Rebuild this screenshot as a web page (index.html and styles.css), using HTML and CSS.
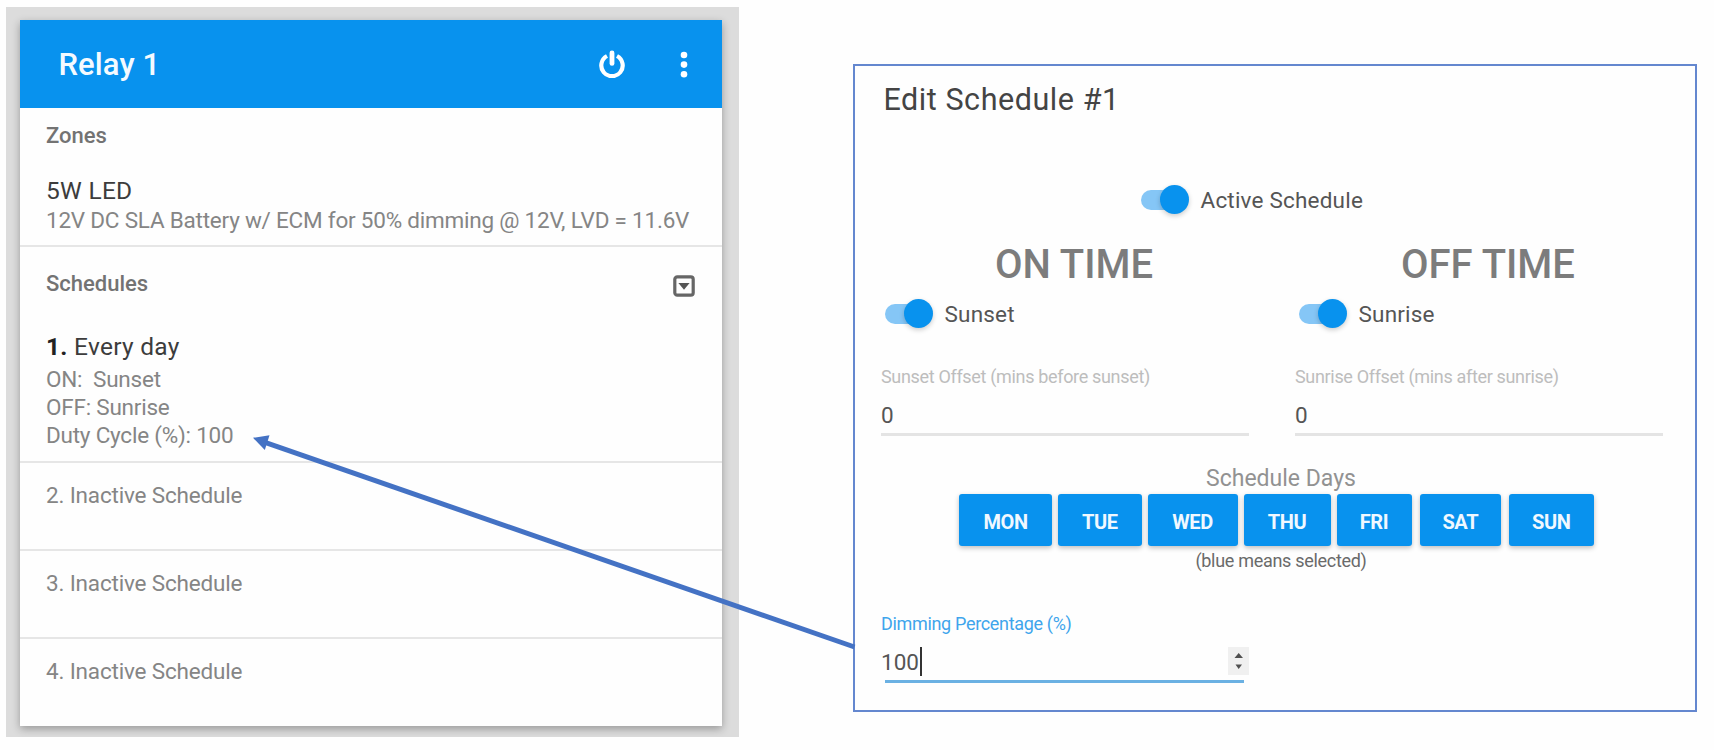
FILE: index.html
```html
<!DOCTYPE html>
<html lang="en">
<head>
    <meta charset="UTF-8">
    <meta name="viewport" content="width=device-width, initial-scale=1.0">
    <title>Relay Schedules</title>
    <link rel="stylesheet" href="styles.css">
</head>
<body>
    <div class="page">
        <div class="relay-wrap">
            <div class="relay-card">
                <div class="relay-header">
                    <h1>Relay 1</h1>
                    <svg class="icon-power" viewBox="0 0 28 28" width="28" height="28">
                        <path d="M9 6 A10.7 10.7 0 1 0 19 6" fill="none" stroke="#fff" stroke-width="4.2"/>
                        <path d="M14 3 V13.4" fill="none" stroke="#fff" stroke-width="4.8" stroke-linecap="round"/>
                    </svg>
                    <svg class="icon-more" viewBox="0 0 8 28" width="8" height="28">
                        <circle cx="4" cy="5" r="3.3" fill="#fff"/>
                        <circle cx="4" cy="14.6" r="3.3" fill="#fff"/>
                        <circle cx="4" cy="24.3" r="3.3" fill="#fff"/>
                    </svg>
                </div>

                <div class="section zones">
                    <h2>Zones</h2>
                    <div class="item-title zone-title">5W LED</div>
                    <div class="item-text zone-text">12V DC SLA Battery w/ ECM for 50% dimming @ 12V, LVD = 11.6V</div>
                </div>

                <div class="section schedules">
                    <div class="section-head">
                        <h2 class="schedules-title">Schedules</h2>
                        <svg viewBox="0 0 22 22" width="22" height="22">
                            <rect x="1.8" y="1.8" width="18.4" height="18.4" rx="2.5" fill="none" stroke="#666" stroke-width="3.2"/>
                            <path d="M5.4 8 H16.6 L11 14.8 Z" fill="#555"/>
                        </svg>
                    </div>
                    <div class="item-title every-day"><b>1.</b> Every day</div>
                    <div class="item-text on-line">ON:&nbsp; Sunset</div>
                    <div class="item-text off-line">OFF: Sunrise</div>
                    <div class="item-text duty-line">Duty Cycle (%): 100</div>
                </div>

                <div class="section inactive">2. Inactive Schedule</div>
                <div class="section inactive">3. Inactive Schedule</div>
                <div class="section inactive">4. Inactive Schedule</div>
            </div>
        </div>

        <div class="edit-panel">
            <h1>Edit Schedule #1</h1>

            <div class="toggle-row active-row">
                <span class="toggle"></span>
                <span class="active-label">Active Schedule</span>
            </div>

            <div class="times">
                <div class="time">
                    <h2 class="on-time">ON TIME</h2>
                    <div class="toggle-row">
                        <span class="toggle"></span>
                        <span>Sunset</span>
                    </div>
                    <div class="field">
                        <div class="field-label">Sunset Offset (mins before sunset)</div>
                        <div class="field-value">0</div>
                    </div>
                </div>
                <div class="time">
                    <h2 class="off-time">OFF TIME</h2>
                    <div class="toggle-row">
                        <span class="toggle"></span>
                        <span>Sunrise</span>
                    </div>
                    <div class="field">
                        <div class="field-label">Sunrise Offset (mins after sunrise)</div>
                        <div class="field-value">0</div>
                    </div>
                </div>
            </div>

            <div class="days-title">Schedule Days</div>
            <div class="days">
                <button class="mon">MON</button>
                <button class="tue">TUE</button>
                <button class="wed">WED</button>
                <button class="thu">THU</button>
                <button class="fri">FRI</button>
                <button class="sat">SAT</button>
                <button class="sun">SUN</button>
            </div>
            <div class="days-note">(blue means selected)</div>

            <div class="field dimming">
                <div class="field-label">Dimming Percentage (%)</div>
                <div class="field-value">
                    <span>100</span><span class="caret"></span>
                    <svg class="spinner" viewBox="0 0 21 28" width="21" height="28">
                        <rect width="21" height="28" fill="#f0f0f0"/>
                        <path d="M6.5 11 L10.7 6 L15 11 Z M7.5 17.5 H14 L10.7 22 Z" fill="#505050"/>
                    </svg>
                </div>
            </div>
        </div>

        <!-- arrow from the dimming field to the duty cycle line -->
        <svg class="arrow" viewBox="0 0 1714 750" width="1714" height="750">
            <path d="M854.5 647 L265 442.3" stroke="#4472c4" stroke-width="5" fill="none"/>
            <path d="M253 437.8 L269.5 435.3 L264.8 450 Z" fill="#4472c4"/>
        </svg>
    </div>
</body>
</html>
```
FILE: styles.css
```css
* {
    box-sizing: border-box;
}
body {
    margin: 0;
    background-color: #fefefe;
    font-family: Roboto, Arial, sans-serif;
}
h1, h2 {
    margin: 0;
}
.page {
    position: relative;
    display: flex;
    align-items: flex-start;
    width: 1714px;
    height: 750px;
    padding: 7px 0 0 6px;
    overflow: hidden;
}

/* Relay card */
.relay-wrap {
    width: 733px;
    height: 730px;
    padding: 13px 17px 11px 14px;
    background-color: #dcdcdc;
    overflow: hidden;
}
.relay-card {
    height: 706px;
    background-color: #fefefe;
    box-shadow: 0 3px 8px rgba(0, 0, 0, 0.3);
}
.relay-header {
    display: flex;
    align-items: center;
    height: 88px;
    padding: 0 34px 0 38.5px;
    background-color: #0892ee;
}
.relay-header h1 {
    flex: 1;
    color: #f4faff;
    font-size: 31px;
    font-weight: 500;
    letter-spacing: 0.1px;
}
.icon-more {
    margin-left: 54.5px;
}
.section {
    padding: 0 26px;
    border-bottom: 2px solid #e6e6e6;
}
.section:last-child {
    border-bottom: none;
}
.section h2 {
    color: #737373;
    font-size: 22px;
    font-weight: 500;
    line-height: 30px;
}
.zones {
    height: 139px;
    padding-top: 13px;
}
.item-title {
    color: #3c3c3c;
    font-size: 24.5px;
    letter-spacing: 0.28px;
    line-height: 30px;
}
.item-title b {
    color: #222;
}
.zone-title {
    margin-top: 25px;
}
.item-text {
    color: #858585;
    font-size: 22.5px;
    letter-spacing: -0.22px;
    line-height: 28.2px;
    white-space: nowrap;
}
.schedules {
    height: 215.5px;
    padding-top: 21.5px;
}
.section-head {
    display: flex;
    justify-content: space-between;
    align-items: center;
}
.section-head svg {
    margin: 4px 1px 0 0;
}
.every-day {
    margin: 33.5px 0 3px;
}
.inactive {
    height: 88.2px;
    padding-top: 18.2px;
    color: #858585;
    font-size: 22.5px;
    letter-spacing: -0.17px;
    line-height: 28px;
}

/* Edit panel */
.edit-panel {
    width: 844px;
    height: 648px;
    margin: 57px 0 0 114px;
    padding: 14px 31px 0 26px;
    border: 2px solid #6487cf;
    color: #555;
}
.edit-panel h1 {
    padding-left: 2.5px;
    color: #444;
    font-size: 30.5px;
    font-weight: 400;
    letter-spacing: 0.55px;
    line-height: 40px;
}
.toggle-row {
    display: flex;
    align-items: center;
    gap: 12px;
    height: 30px;
    padding-left: 3.5px;
    font-size: 22.5px;
    letter-spacing: 0.2px;
}
.toggle {
    display: flex;
    align-items: center;
    justify-content: flex-end;
    width: 48px;
    height: 20px;
    border-radius: 10px;
    background: linear-gradient(to right, #85c6f6 34px, transparent 34px);
}
.toggle::after {
    content: "";
    width: 29px;
    height: 29px;
    border-radius: 50%;
    background-color: #0892ee;
    box-shadow: 0 2px 5px rgba(0, 0, 0, 0.2);
}
.active-row {
    margin-top: 64.5px;
    padding-left: 259.5px;
}
.times {
    display: grid;
    grid-template-columns: 368px 368px;
    column-gap: 46px;
    margin-top: 30.8px;
}
.time h2 {
    padding-left: 18px;
    color: #7c7c7c;
    font-size: 40px;
    font-weight: 500;
    line-height: 40px;
    text-align: center;
}
.time .toggle-row {
    margin-top: 13.5px;
}
.time .field {
    margin-top: 36.5px;
}
.field {
    width: 368px;
}
.field-label {
    color: #bdbdbd;
    font-size: 18px;
    letter-spacing: -0.33px;
    line-height: 24px;
}
.field-value {
    display: flex;
    height: 47px;
    padding-top: 11px;
    border-bottom: 3px solid #e4e4e4;
    font-size: 22.5px;
    line-height: 30px;
}
.days-title {
    margin-top: 28.5px;
    padding-left: 17px;
    color: #929292;
    font-size: 23px;
    line-height: 28px;
    text-align: center;
}
.days {
    display: flex;
    gap: 6px;
    margin: 1.5px 0 0 78px;
}
.days button {
    height: 52px;
    padding: 3px 0 0;
    border: none;
    border-radius: 3px;
    background-color: #0892ee;
    box-shadow: 0 2px 5px rgba(0, 0, 0, 0.25);
    color: #f0f8ff;
    font-family: inherit;
    font-size: 20px;
    font-weight: 700;
    letter-spacing: -0.4px;
}
.mon { width: 93px; }
.tue { width: 83.5px; }
.wed { width: 90px; }
.thu { width: 87px; }
.fri { width: 75px; }
.days .sat {
    width: 81.5px;
    margin-left: 2px;
}
.days .sun {
    width: 84.5px;
    margin-left: 2px;
}
.days-note {
    margin-top: 3px;
    padding-left: 17px;
    font-size: 18px;
    letter-spacing: -0.3px;
    line-height: 24px;
    text-align: center;
    color: #6a6a6a;
}
.dimming {
    margin-top: 38.3px;
}
.dimming .field-label {
    color: #3fa5ec;
}
.dimming .field-value {
    border-bottom: none;
    background: linear-gradient(#6bb1e3, #6bb1e3) 4px 100% / 359px 3px no-repeat;
}
.caret {
    width: 2px;
    height: 29px;
    margin-left: 1px;
    background-color: #333;
}
.spinner {
    margin-left: auto;
}

.arrow {
    position: absolute;
    top: 0;
    left: 0;
}
```
